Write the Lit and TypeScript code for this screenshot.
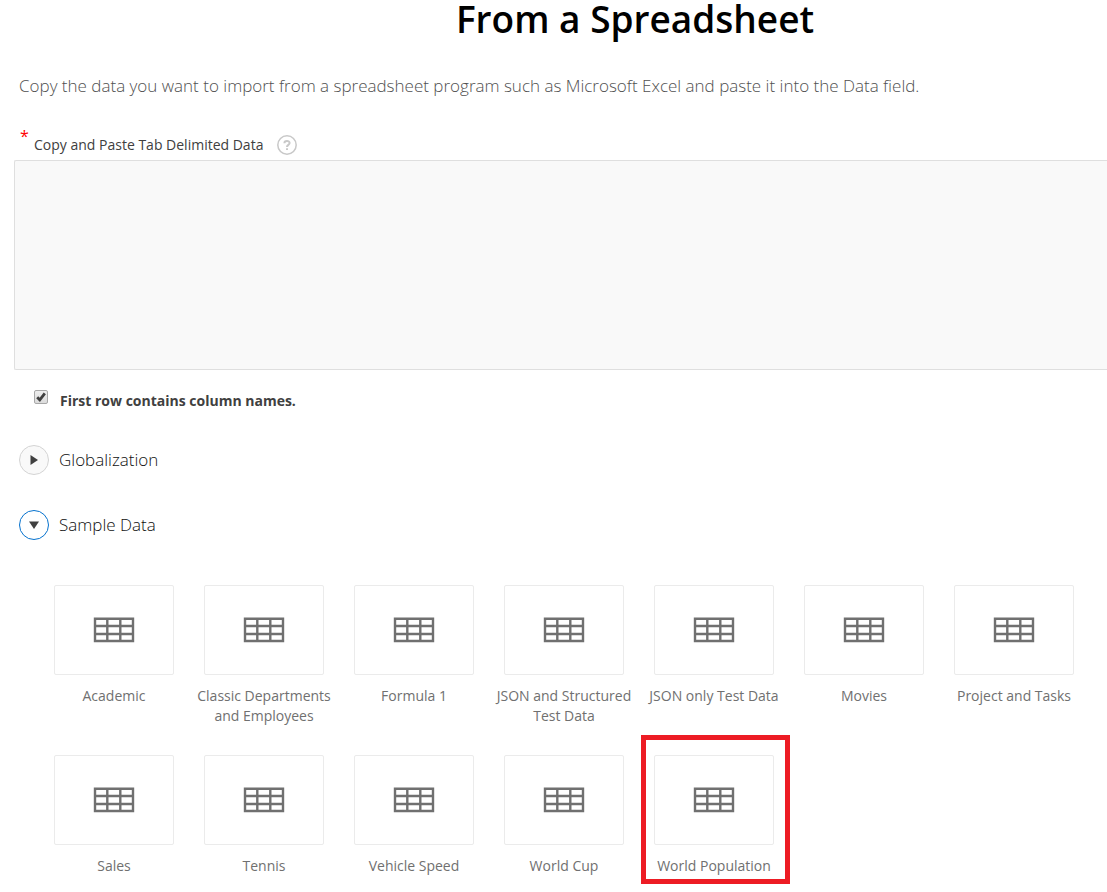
import { LitElement, html, css } from "lit";
import { customElement, state } from "lit/decorators.js";
import { classMap } from "lit/directives/class-map.js";

const SAMPLES = [
  "Academic",
  "Classic Departments and Employees",
  "Formula 1",
  "JSON and Structured Test Data",
  "JSON only Test Data",
  "Movies",
  "Project and Tasks",
  "Sales",
  "Tennis",
  "Vehicle Speed",
  "World Cup",
  "World Population",
];

const tableIcon = html`<svg class="table-icon" viewBox="0 0 42 28" aria-hidden="true">
  <path fill="none" stroke="#707070" stroke-width="2.4"
    d="M2 2.8H40V25H2ZM2 10H40M2 18H40M14.3 3V25M27.3 3V25" />
</svg>`;

@customElement("app-root")
export class AppRoot extends LitElement {
  static styles = css`
    :host {
      display: block;
      background: #fff;
      color: #404040;
      font-family: "Segoe UI", "Open Sans", "Noto Sans", sans-serif;
      font-size: 14px;
      line-height: 20px;
    }
    *, *::after { box-sizing: border-box; }
    button {
      font: inherit;
      color: inherit;
      background: none;
      border: 0;
      padding: 0;
      cursor: pointer;
    }
    h1 {
      margin: 0;
      padding-left: 163px;
      text-align: center;
      font-size: 37px;
      line-height: 38px;
      font-weight: 600;
      color: #000;
    }
    .intro {
      margin: 36px 19px 0;
      font-size: 17px;
      line-height: 24px;
      font-weight: 300;
      color: #505050;
    }
    .field-head {
      display: flex;
      align-items: center;
      gap: 14px;
      margin-top: 35px;
      padding-left: 20px;
      height: 24px;
    }
    .field-label { display: flex; gap: 6px; }
    .required {
      align-self: flex-start;
      width: 8px;
      color: #f00;
      font-size: 16px;
      line-height: 2px;
    }
    .help, .help svg { display: block; width: 20px; height: 20px; }
    .data {
      display: block;
      width: calc(100% - 14px);
      height: 210px;
      margin: 3px 0 0 14px;
      padding: 8px;
      border: 1px solid #dfdfdf;
      border-right: 0;
      border-radius: 2px 0 0 2px;
      background: #f9f9f9;
      font: inherit;
      resize: none;
    }
    .check {
      display: flex;
      gap: 12px;
      margin-top: 20px;
      padding-left: 34px;
      font-weight: 700;
    }
    .check input {
      appearance: none;
      width: 14px;
      height: 14px;
      margin: 0;
      border: 1px solid #a8a8a8;
      border-radius: 2px;
      background: linear-gradient(#eee, #dcdcdc);
    }
    .check input:checked {
      background: url("data:image/svg+xml,%3Csvg xmlns='http://www.w3.org/2000/svg' viewBox='0 0 12 12'%3E%3Cpath d='M2.2 6.2L4.8 8.8L9.8 2.4' fill='none' stroke='%23404040' stroke-width='2.8'/%3E%3C/svg%3E"),
        linear-gradient(#eee, #dcdcdc);
    }
    .check label { padding-top: 1px; }
    h2 {
      margin: 0;
      font-size: 17px;
      line-height: 30px;
      font-weight: 300;
      color: #101010;
    }
    .sections {
      display: grid;
      gap: 35px;
      margin-top: 34px;
      padding-left: 19px;
    }
    .toggle { display: flex; align-items: center; gap: 10px; }
    .disc {
      display: flex;
      align-items: center;
      justify-content: center;
      width: 30px;
      height: 30px;
      border: 1px solid #d4d4d4;
      border-radius: 50%;
      background: #f9f9f9;
    }
    .disc.open { border-color: #0572ce; background: #fff; }
    .disc svg { display: block; width: 10px; height: 10px; fill: #404040; }
    .disc.open svg { transform: rotate(90deg); }
    .tiles {
      display: grid;
      grid-template-columns: repeat(auto-fill, 150px);
      row-gap: 29px;
      margin: 45px 0 0;
      padding: 0 0 15px 39px;
      list-style: none;
    }
    .tile { position: relative; }
    .tile button {
      display: flex;
      flex-direction: column;
      align-items: center;
      gap: 11px;
      width: 100%;
      color: #707070;
    }
    .thumb {
      display: flex;
      align-items: center;
      justify-content: center;
      width: 120px;
      height: 90px;
      border: 1px solid #ebebeb;
      border-radius: 2px;
    }
    .caption { padding: 0 4px; }
    .table-icon { display: block; width: 42px; height: 28px; }
    .marked::after {
      content: "";
      position: absolute;
      top: -20px;
      left: 2px;
      right: -1px;
      height: 149px;
      border: 5px solid #ed1c24;
      pointer-events: none;
    }
  `;

  @state() private globalizationOpen = false;
  @state() private sampleOpen = true;

  private section(title: string, open: boolean, toggle: () => void) {
    return html`<h2>
      <button class="toggle" aria-expanded=${open} @click=${toggle}>
        <span class=${classMap({ disc: true, open })}>
          <svg viewBox="0 0 10 10" aria-hidden="true"><path d="M1.5 0L9 5L1.5 10Z" /></svg>
        </span>
        ${title}
      </button>
    </h2>`;
  }

  render() {
    return html`
      <h1>From a Spreadsheet</h1>
      <p class="intro">Copy the data you want to import from a spreadsheet program such as Microsoft Excel and paste it into the Data field.</p>
      <div class="field-head">
        <label class="field-label" for="data"><span class="required">*</span>Copy and Paste Tab Delimited Data</label>
        <button class="help" aria-label="Help">
          <svg viewBox="0 0 20 20" fill="none" stroke="#c8c8c8" aria-hidden="true">
            <circle cx="10" cy="10" r="9.2" stroke-width="1.5" />
            <path d="M7.4 8.2C7.4 5.2 12.6 5.2 12.6 8.1C12.6 10 10 9.8 10 12M10 13.2V15" stroke-width="2" />
          </svg>
        </button>
      </div>
      <textarea class="data" id="data" required></textarea>
      <div class="check">
        <input type="checkbox" id="first-row" checked />
        <label for="first-row">First row contains column names.</label>
      </div>
      <div class="sections">
        ${this.section("Globalization", this.globalizationOpen, () => (this.globalizationOpen = !this.globalizationOpen))}
        ${this.section("Sample Data", this.sampleOpen, () => (this.sampleOpen = !this.sampleOpen))}
      </div>
      ${this.sampleOpen
        ? html`<ul class="tiles">
            ${SAMPLES.map(
              (name) => html`<li class=${classMap({ tile: true, marked: name === "World Population" })}>
                <button><span class="thumb">${tableIcon}</span><span class="caption">${name}</span></button>
              </li>`
            )}
          </ul>`
        : ""}
    `;
  }
}
